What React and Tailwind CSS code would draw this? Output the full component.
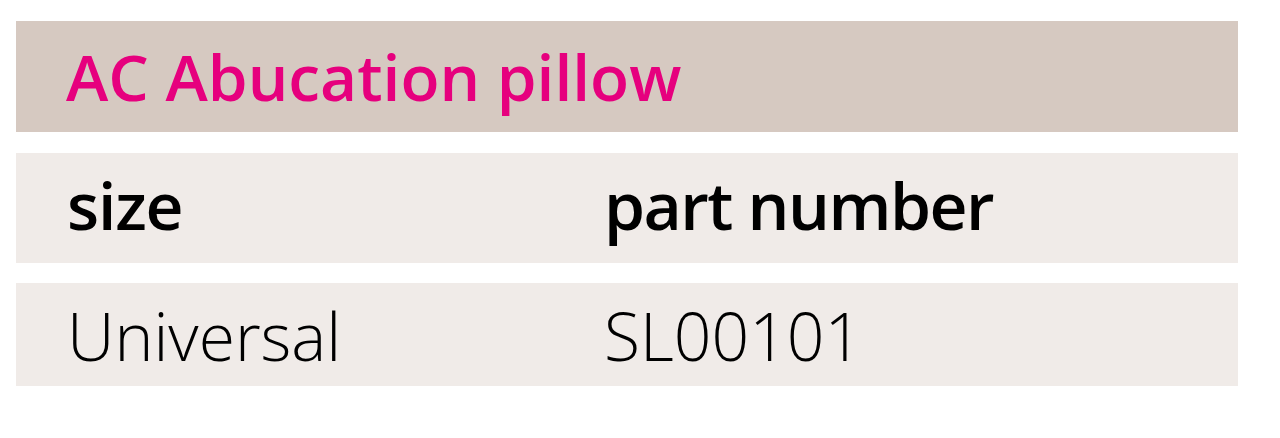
export default function App() {
  return (
    <div className="w-[1280px] h-[438px] bg-white pt-[21px] pl-[16px]" style={{ fontFamily: '"Open Sans", sans-serif' }}>
      <div className="w-[1222px] flex flex-col">
        <div className="h-[111px] bg-[#d6c9c1] flex items-center pl-[50px]">
          <span className="text-[64px] leading-none text-[#e6007e] font-semibold">AC Abucation pillow</span>
        </div>
        <div className="h-[110px] mt-[21px] bg-[#f0ebe8] flex items-center pl-[51px] pb-[9px]">
          <span className="w-[537px] text-[66px] leading-none font-semibold tracking-[-1.2px] text-black">size</span>
          <span className="text-[66px] leading-none font-semibold tracking-[-1.5px] text-black">part number</span>
        </div>
        <div className="h-[103px] mt-[20px] bg-[#f0ebe8] flex items-center pl-[51px]">
          <span className="w-[537px] text-[66px] leading-none font-light text-black">Universal</span>
          <span className="text-[66px] leading-none font-light text-black">SL00101</span>
        </div>
      </div>
    </div>
  );
}
